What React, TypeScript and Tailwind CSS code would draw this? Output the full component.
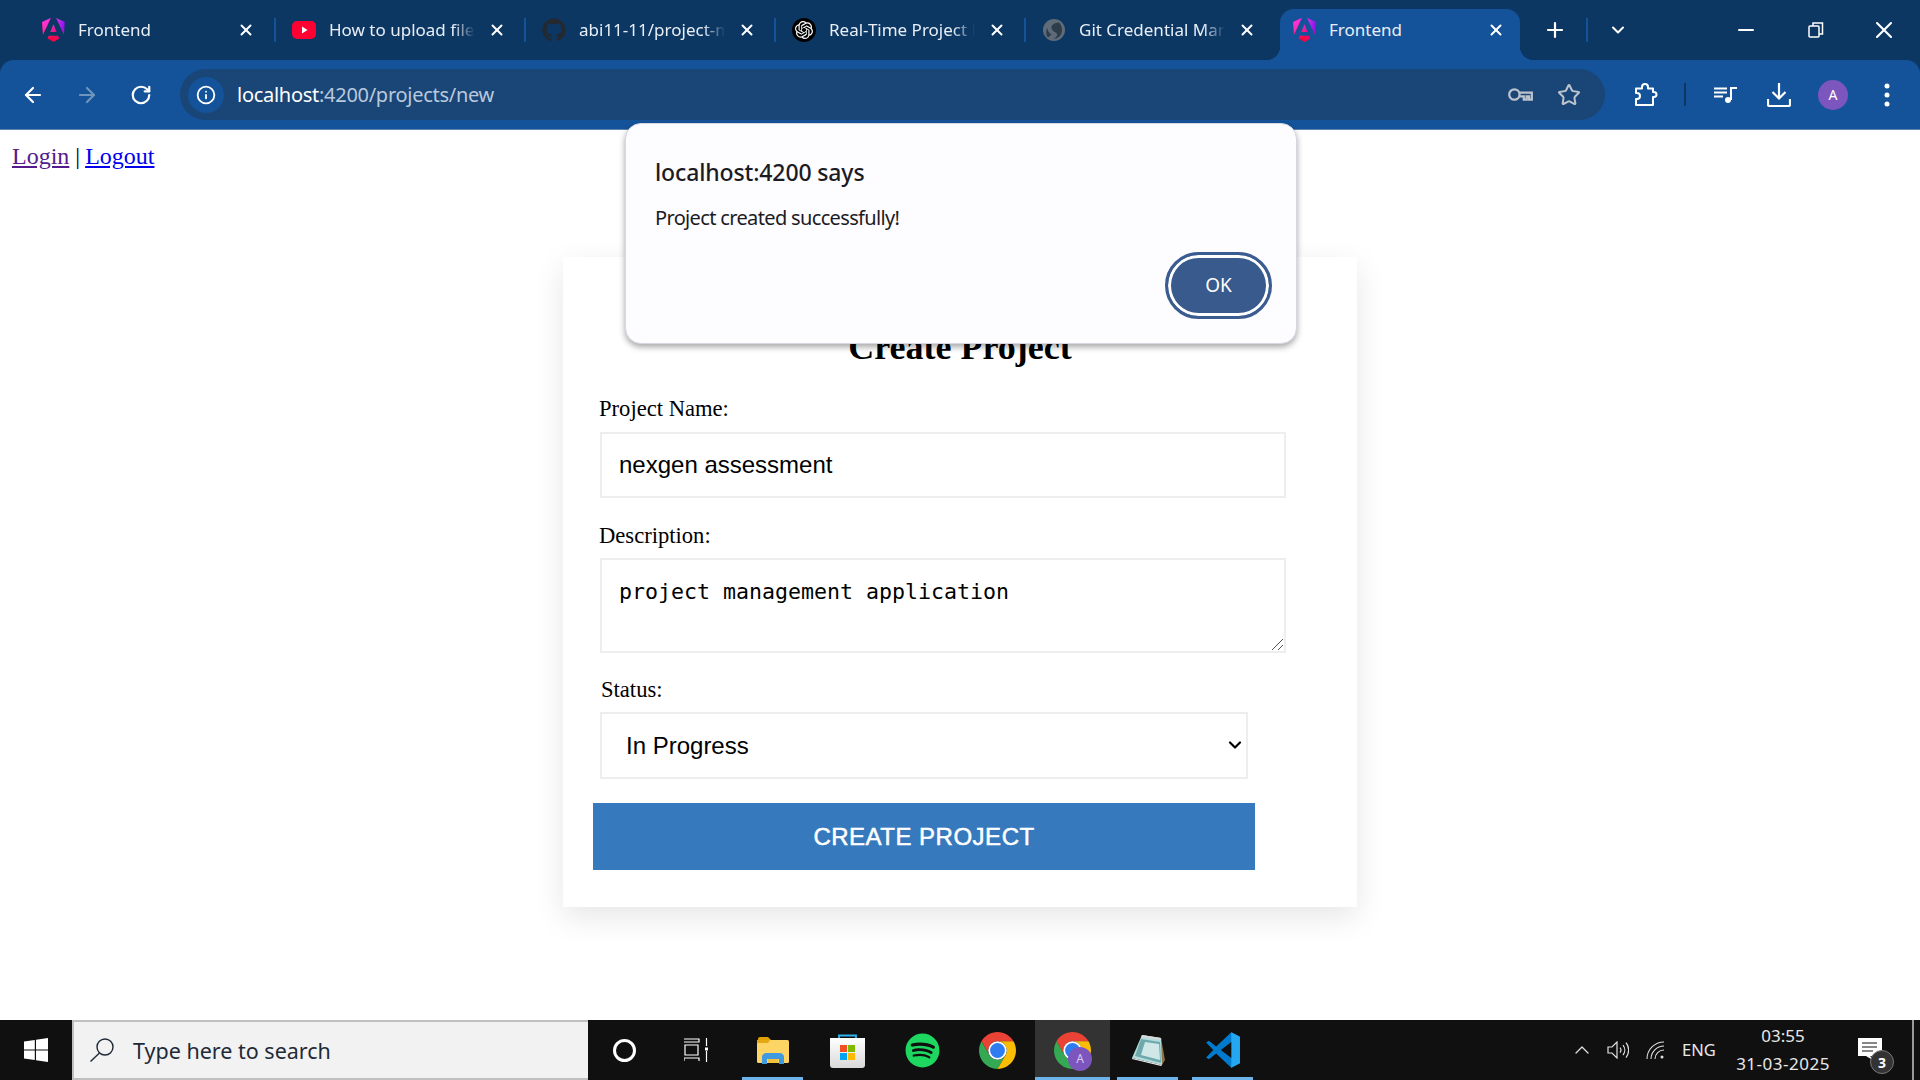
import React from 'react';
import {
  ArrowLeft,
  ArrowRight,
  ChevronDown,
  ChevronUp,
  Info,
  Minus,
  Plus,
  RotateCw,
  Star,
  X,
} from 'lucide-react';
import { FaGithub, FaSpotify } from 'react-icons/fa';
import { SiOpenai } from 'react-icons/si';

const AngularIcon = () => (
  <svg viewBox="0 0 223 236" className="w-[23px] h-[24px] shrink-0">
    <defs>
      <linearGradient id="ng" x1="49" y1="218" x2="225" y2="35" gradientUnits="userSpaceOnUse">
        <stop offset="0" stopColor="#e40035" />
        <stop offset="0.24" stopColor="#f60a48" />
        <stop offset="0.49" stopColor="#dc087d" />
        <stop offset="0.74" stopColor="#9717e7" />
        <stop offset="1" stopColor="#6c00f5" />
      </linearGradient>
      <linearGradient id="ng2" x1="41" y1="28" x2="148" y2="150" gradientUnits="userSpaceOnUse">
        <stop offset="0" stopColor="#ff31d9" />
        <stop offset="1" stopColor="#ff5be1" stopOpacity="0" />
      </linearGradient>
    </defs>
    <path
      fill="url(#ng)"
      d="m222.077 39.192-8.019 125.923L137.387 0l84.69 39.192Zm-53.105 162.825-57.933 33.056-57.934-33.056 11.783-28.556h92.301l11.783 28.556ZM111.039 62.675l30.357 73.803H80.681l30.358-73.803ZM7.937 165.115 0 39.192 84.69 0 7.937 165.115Z"
    />
    <path
      fill="url(#ng2)"
      d="m222.077 39.192-8.019 125.923L137.387 0l84.69 39.192Zm-53.105 162.825-57.933 33.056-57.934-33.056 11.783-28.556h92.301l11.783 28.556ZM111.039 62.675l30.357 73.803H80.681l30.358-73.803ZM7.937 165.115 0 39.192 84.69 0 7.937 165.115Z"
    />
  </svg>
);

const YoutubeIcon = () => (
  <svg viewBox="0 0 24 24" className="w-[24px] h-[24px] shrink-0">
    <rect x="0" y="3" width="24" height="18" rx="5" fill="#ff0033" />
    <path d="M10 8.500v7l5.500-3.500z" fill="#fff" />
  </svg>
);

const GitCredIcon = () => (
  <svg viewBox="0 0 24 24" className="w-[24px] h-[24px] shrink-0">
    <circle cx="12" cy="12" r="11" fill="#5f6b78" />
    <path d="M17 4.500C11 5 8 8 10 11.500s6 2.500 5 6c-.5 1.500-2 2.500-4 3 5 .5 9-3 9-8.500 0-3-1.200-5.600-3-7.500z" fill="#2f3c4a" />
    <path d="M6 19.500C4 17 3.500 13 5.500 9.500c-.5 3.500 2 5.500 4 7-1 1-2.200 2-3.500 3z" fill="#2f3c4a" />
  </svg>
);

const ChromeLogo = ({ className }: { className: string }) => (
  <svg viewBox="4 4 40 40" className={className}>
    <path fill="#ea4335" d="M24 4C16.600 4 10.100 8 6.700 14l8.640 15A10 10 0 0 1 24 14h17.300C37.900 8 31.400 4 24 4z" />
    <path fill="#34a853" d="M6.700 14A20 20 0 0 0 24 44l8.660-15a10 10 0 0 1-17.320 0L6.700 14z" />
    <path fill="#fbbc04" d="M41.300 14H24a10 10 0 0 1 8.660 15L24 44a20 20 0 0 0 17.300-30z" />
    <circle cx="24" cy="24" r="10" fill="#fff" />
    <circle cx="24" cy="24" r="8" fill="#2f7cf0" />
  </svg>
);

const ExplorerIcon = () => (
  <svg viewBox="0 0 32 27" className="w-[32px] h-[27px]">
    <path d="M1 2a2 2 0 0 1 2-2h8l3 3h-13z" fill="#e0a000" />
    <rect x="0" y="3" width="32" height="23" rx="1.500" fill="#fdd565" />
    <path d="M0 3h13l-2 3H0z" fill="#e5a812" />
    <path d="M5 27v-7a6 4 0 0 1 4-4h14a6 4 0 0 1 4 4v7h-5v-5H10v5z" fill="#3f9ae0" />
    <rect x="11" y="22" width="10" height="4" fill="#f3c23c" />
  </svg>
);

const StoreIcon = () => (
  <svg viewBox="0 0 35 35" className="w-[35px] h-[35px]">
    <defs>
      <linearGradient id="bag" x1="0" y1="0" x2="0" y2="1">
        <stop offset="0" stopColor="#ffffff" />
        <stop offset="1" stopColor="#d9d9d9" />
      </linearGradient>
    </defs>
    <path d="M9 7V2.500h17V7" fill="none" stroke="#2fb4f0" strokeWidth="1.800" />
    <path d="M0 5h35v27a3 3 0 0 1-3 3H3a3 3 0 0 1-3-3z" fill="url(#bag)" />
    <rect x="10" y="12" width="7" height="7" fill="#f25022" />
    <rect x="18" y="12" width="7" height="7" fill="#7fba00" />
    <rect x="10" y="20" width="7" height="7" fill="#00a4ef" />
    <rect x="18" y="20" width="7" height="7" fill="#ffb900" />
  </svg>
);

const NotepadIcon = () => (
  <svg viewBox="0 0 34 33" className="w-[34px] h-[33px]">
    <path d="M11 1l19 3 4 22-3 5-8-3z" fill="#8d7344" />
    <path d="M11 1l19 3 1 27L1 24z" fill="#b5dcdc" />
    <path d="M11 1l19 3 .2 2-20-3z" fill="#d8d8d8" />
    <path d="M10 5l19 3 1 21L4 22z" fill="#6ea9ad" />
    <path d="M14 8l14 2 1 16-19-5z" fill="#cfe7e6" />
    <path d="M1 24l30 7-1 1-29-7z" fill="#eeeeee" />
  </svg>
);

const VsCodeIcon = () => (
  <svg viewBox="0 0 100 100" className="w-[36px] h-[36px]">
    <path d="M73 1 31 40 11 24l-8 5 20 21-20 21 8 5 20-16 42 39 24-12V13z" fill="#007acc" />
    <path d="M73 1l24 12v74L73 99z" fill="#24a8f2" />
    <path d="M73 28v44L44 50z" fill="#101010" />
  </svg>
);

const tabs = [
  { title: 'Frontend', icon: <AngularIcon /> },
  { title: 'How to upload files to github', icon: <YoutubeIcon /> },
  { title: 'abi11-11/project-management', icon: <FaGithub className="w-[24px] h-[24px] shrink-0 text-[#24292f]" /> },
  {
    title: 'Real-Time Project Management',
    icon: (
      <span className="w-[24px] h-[24px] shrink-0 rounded-full bg-black flex items-center justify-center">
        <SiOpenai className="w-[18px] h-[18px] text-white" />
      </span>
    ),
  },
  { title: 'Git Credential Manager', icon: <GitCredIcon /> },
];

const TabItem = ({ title, icon, last }: { title: string; icon: React.ReactNode; last: boolean }) => (
  <div className="w-[250px] h-[36px] flex items-center pl-[16px] relative">
    {icon}
    <span className="ml-[13px] w-[146px] overflow-hidden whitespace-nowrap text-[17px] text-[#e8eef6] [mask-image:linear-gradient(to_right,#000_85%,transparent)]">
      {title}
    </span>
    <X className="w-[18px] h-[18px] ml-[13px] text-white" strokeWidth={2.6} />
    {!last && <span className="absolute right-0 top-[6px] h-[24px] w-[2px] bg-[#14539a]" />}
  </div>
);

const ToolbarIcon = ({ children, className }: { children: React.ReactNode; className: string }) => (
  <div className={`flex items-center justify-center shrink-0 ${className}`}>{children}</div>
);

const TaskItem = ({ children, underline, active }: { children: React.ReactNode; underline?: boolean; active?: boolean }) => (
  <div className={`w-[75px] h-full flex items-center justify-center relative ${active ? 'bg-[#333333]' : ''}`}>
    {children}
    {underline && (
      <span className={`absolute bottom-0 h-[3px] bg-[#6db3ec] ${active ? 'left-0 right-0' : 'left-[7px] right-[7px]'}`} />
    )}
  </div>
);

export default function App() {
  return (
    <div className="h-screen w-full flex flex-col overflow-hidden relative bg-white font-['Noto_Sans',sans-serif]">
      {/* tab strip */}
      <div className="h-[60px] shrink-0 bg-[#0d3763] flex pl-[26px] pt-[12px] text-white">
        {tabs.map((t, i) => (
          <TabItem key={t.title} title={t.title} icon={t.icon} last={i === tabs.length - 1} />
        ))}
        <div className="w-[240px] h-[51px] -mt-[3px] ml-[4px] rounded-t-[14px] bg-[#14539a] flex items-center pl-[13px] pb-[9px] relative">
          <AngularIcon />
          <span className="ml-[13px] w-[158px] text-[17px] text-[#e8eef6]">Frontend</span>
          <X className="w-[18px] h-[18px] text-white" strokeWidth={2.6} />
          <span className="absolute bottom-0 -left-[14px] w-[14px] h-[14px] bg-[radial-gradient(circle_at_0_0,transparent_14px,#14539a_14.500px)]" />
          <span className="absolute bottom-0 -right-[14px] w-[14px] h-[14px] bg-[radial-gradient(circle_at_100%_0,transparent_14px,#14539a_14.500px)]" />
        </div>
        <div className="flex items-center h-[36px] ml-[23px]">
          <Plus className="w-[24px] h-[24px]" strokeWidth={2.2} />
          <span className="w-[2px] h-[24px] bg-[#14539a] ml-[19px]" />
          <ChevronDown className="w-[20px] h-[20px] ml-[20px]" strokeWidth={2.4} />
          <Minus className="w-[24px] h-[24px] ml-[106px]" strokeWidth={2} />
          <svg viewBox="0 0 16 16" className="w-[16px] h-[16px] ml-[50px]" fill="none" stroke="#fff" strokeWidth="1.500">
            <rect x="1" y="4" width="10" height="11" rx="1" />
            <path d="M5 4V1h9.500v11H11" />
          </svg>
          <X className="w-[28px] h-[28px] ml-[46px]" strokeWidth={1.800} />
        </div>
      </div>

      {/* toolbar */}
      <div className="h-[70px] shrink-0 bg-[#0d3763]">
        <div className="h-full rounded-t-[14px] bg-[#14539a] border-b border-[#5f83ad] flex items-center text-white">
          <ToolbarIcon className="w-[66px]">
            <ArrowLeft className="w-[24px] h-[24px]" strokeWidth={2.2} />
          </ToolbarIcon>
          <ToolbarIcon className="w-[42px]">
            <ArrowRight className="w-[24px] h-[24px] text-[#6f94be]" strokeWidth={2.2} />
          </ToolbarIcon>
          <ToolbarIcon className="w-[66px]">
            <RotateCw className="w-[22px] h-[22px]" strokeWidth={2.4} />
          </ToolbarIcon>
          <div className="ml-[6px] w-[1425px] h-[51px] rounded-full bg-[#1a4577] flex items-center pl-[8px]">
            <div className="w-[36px] h-[36px] rounded-full bg-[#14539a] flex items-center justify-center">
              <Info className="w-[20px] h-[20px]" strokeWidth={2.2} />
            </div>
            <span className="ml-[13px] text-[20px] tracking-[-0.28px]">
              localhost<span className="text-[#b9c9dd]">:4200/projects/new</span>
            </span>
            <div className="ml-auto flex items-center text-[#bcc4ce] pr-[24px]">
              <svg viewBox="0 0 28 17" className="w-[27px] h-[16px]" fill="none" stroke="currentColor" strokeWidth="2.400">
                <circle cx="7.500" cy="8" r="5.500" />
                <path d="M13 6h13v7.500h-3V10h-2.500v3.500h-3V10H13" />
              </svg>
              <Star className="w-[24px] h-[24px] ml-[23px]" strokeWidth={2} />
            </div>
          </div>
          {/* extensions */}
          <svg viewBox="0 0 24 23" className="w-[24px] h-[23px] ml-[29px]" fill="none" stroke="#fff" strokeWidth="2" strokeLinejoin="round">
            <path d="M2 5.500h6V4a3 3 0 0 1 6 0v1.500h5V9h1a2.500 2.500 0 0 1 0 5h-1v8H2v-6h1a3 3 0 0 0 0-6H2z" />
          </svg>
          <span className="w-[2px] h-[23px] bg-[#0d3763] ml-[26px]" />
          {/* media controls */}
          <svg viewBox="0 0 23 16" className="w-[23px] h-[16px] ml-[28px]" fill="none" stroke="#fff" strokeWidth="1.800">
            <path d="M0 1.500h13M0 5.500h13M0 9.500h9" />
            <path d="M17 13V1h6" strokeWidth="2" />
            <circle cx="14" cy="13" r="3" fill="#fff" stroke="none" />
          </svg>
          {/* downloads */}
          <svg viewBox="0 0 24 24" className="w-[24px] h-[24px] ml-[30px]" fill="none" stroke="#fff" strokeWidth="2.200">
            <path d="M12 0v15M5.500 9l6.500 6.500L18.500 9" />
            <path d="M1 16v5.500a1.500 1.500 0 0 0 1.500 1.500h19a1.500 1.500 0 0 0 1.500-1.500V16" />
          </svg>
          <div className="w-[30px] h-[30px] rounded-full bg-[#7c55bd] ml-[27px] flex items-center justify-center text-[14px]">A</div>
          <svg viewBox="0 0 6 24" className="w-[6px] h-[24px] ml-[36px]" fill="#fff">
            <circle cx="3" cy="3" r="2.500" />
            <circle cx="3" cy="12" r="2.500" />
            <circle cx="3" cy="21" r="2.500" />
          </svg>
        </div>
      </div>

      {/* page */}
      <div className="flex-1 min-h-0 font-['Liberation_Serif',serif] text-black">
        <div className="pl-[12px] pt-[13px] text-[24px] leading-[27px]">
          <a className="text-[#551a8b] underline" href="#login">Login</a>
          {' | '}
          <a className="-ml-[1px] text-[#0000ee] underline" href="#logout">Logout</a>
        </div>
        <div className="w-[794px] h-[650px] mx-auto mt-[87px] bg-white shadow-[0_10px_30px_rgba(0,0,0,0.1)] flex flex-col items-start pl-[37px] pt-[72px]">
          <h2 className="w-[720px] text-center text-[36px] leading-[37px] font-bold">Create Project</h2>
          <label className="block mt-[31px] text-[22.600px] leading-[23px] -ml-[1px]">Project Name:</label>
          <input
            readOnly
            value="nexgen assessment"
            className="mt-[12px] w-[686px] h-[66px] border-2 border-[#eeeeee] pl-[17px] text-[24px] font-['Liberation_Sans',sans-serif] outline-none"
          />
          <label className="block mt-[26px] text-[22.600px] leading-[23px] -ml-[1px]">Description:</label>
          <div className="relative mt-[11px] w-[686px] h-[95px]">
            <textarea
              readOnly
              value="project management application"
              className="block w-full h-full border-2 border-[#eeeeee] pl-[17px] pt-[19px] text-[21.600px] leading-[26px] font-['DejaVu_Sans_Mono',monospace] outline-none resize-none"
            />
            <svg viewBox="0 0 11 11" className="absolute right-[3px] bottom-[3px] w-[11px] h-[11px] pointer-events-none" fill="none" stroke="#555555" strokeWidth="1">
              <path d="M0 11 11 0M6 11l5-5" />
            </svg>
          </div>
          <label className="block mt-[25px] text-[22.600px] leading-[23px] ml-[1px]">Status:</label>
          <div className="relative mt-[11px] w-[648px] h-[67px]">
            <select
              defaultValue="In Progress"
              className="w-full h-full appearance-none border-2 border-[#eeeeee] pl-[24px] text-[24px] font-['Liberation_Sans',sans-serif] outline-none bg-white"
            >
              <option>In Progress</option>
            </select>
            <ChevronDown className="absolute right-[3px] top-[23px] w-[20px] h-[20px] pointer-events-none" strokeWidth={2.6} />
          </div>
          <button className="mt-[24px] -ml-[7px] w-[662px] h-[67px] bg-[#3679bd] text-white text-[24px] tracking-[0.5px] font-['Liberation_Sans',sans-serif] [-webkit-text-stroke:0.5px_white]">
            CREATE PROJECT
          </button>
        </div>
      </div>

      {/* alert dialog */}
      <div className="absolute left-[625px] top-[123px] w-[672px] h-[221px] rounded-[16px] bg-[#fdfcff] border border-[#d5d8e4] shadow-[0_3px_6px_rgba(0,0,0,0.35)] flex flex-col pl-[29px] pr-[24px] pt-[32px]">
        <div className="text-[23px] leading-[32px] font-medium text-[#1c1b1f] tracking-[-0.13px]">localhost:4200 says</div>
        <div className="mt-[17px] text-[20px] leading-[26px] text-[#1c1b1f] tracking-[-0.65px]">Project created successfully!</div>
        <button className="self-end mt-[21px] w-[107px] h-[67px] rounded-full bg-[#385a8c] border-[3px] border-[#3b5c91] shadow-[inset_0_0_0_3px_#fff] text-white text-[19px]">
          OK
        </button>
      </div>

      {/* taskbar */}
      <div className="h-[60px] shrink-0 bg-[#101010] flex items-center text-white">
        <div className="w-[72px] h-full flex items-center justify-center">
          <svg viewBox="0 0 24 24" className="w-[24px] h-[24px]" fill="#fff">
            <path d="M0 3.400 10.800 1.900v9.500H0zM12 1.700 24 0v11.400H12zM0 12.600h10.800v9.500L0 20.600zM12 12.600h12V24l-12-1.700z" />
          </svg>
        </div>
        <div className="w-[516px] h-full bg-[#f2f2f2] border-2 border-r-0 border-[#c0c0c0] flex items-center pl-[16px] text-[#1f2a37]">
          <svg viewBox="0 0 24 24" className="w-[24px] h-[24px]" fill="none" stroke="#1f2a37" strokeWidth="1.400">
            <circle cx="15" cy="9" r="8" />
            <path d="M9.500 15 .5 23.500" />
          </svg>
          <span className="ml-[19px] text-[21.500px] mt-[2px]">Type here to search</span>
        </div>
        <div className="w-[72px] h-full flex items-center justify-center">
          <span className="w-[23px] h-[23px] rounded-full border-[3.500px] border-white" />
        </div>
        <div className="w-[72px] h-full flex items-center justify-center">
          <svg viewBox="0 0 24 24" className="w-[24px] h-[24px]" fill="none" stroke="#fff" strokeWidth="1.200">
            <path d="M0 1h15v3H0M0 23v-3h15v3M1 7h13v10H1zM22.500 0v8M22.500 13v11" />
            <rect x="21" y="9.500" width="3" height="3" fill="#fff" stroke="none" />
          </svg>
        </div>
        <div className="ml-[3px] h-full flex">
          <TaskItem underline><ExplorerIcon /></TaskItem>
          <TaskItem><StoreIcon /></TaskItem>
          <TaskItem><FaSpotify className="w-[35px] h-[35px] text-[#1ed760]" /></TaskItem>
          <TaskItem><ChromeLogo className="w-[37px] h-[37px]" /></TaskItem>
          <TaskItem underline active>
            <ChromeLogo className="w-[37px] h-[37px]" />
            <span className="absolute left-[33px] top-[27px] w-[24px] h-[24px] rounded-full bg-[#7c55bd] flex items-center justify-center text-[12px] text-[#d9c8f2]">A</span>
          </TaskItem>
          <TaskItem underline><NotepadIcon /></TaskItem>
          <TaskItem underline><VsCodeIcon /></TaskItem>
        </div>
        <div className="ml-auto h-full flex items-center">
          <ChevronUp className="w-[24px] h-[24px] text-[#e0e0e0] mr-[1px]" strokeWidth={1.300} />
          <svg viewBox="0 0 22 18" className="w-[22px] h-[18px] ml-[12px]" fill="none" stroke="#e0e0e0" strokeWidth="1.200">
            <path d="M1 6h4l5-5v16l-5-5H1z" />
            <path d="M13 6.500a4 4 0 0 1 0 5M16 4a8 8 0 0 1 0 10M19 1.500a12 12 0 0 1 0 15" />
          </svg>
          <svg viewBox="0 0 19 18" className="w-[19px] h-[18px] ml-[17px]" fill="none" stroke="#e0e0e0" strokeWidth="1.100">
            <path d="M1 18A17 17 0 0 1 18 1M5 18A13 13 0 0 1 18 5M9 18a9 9 0 0 1 9-9" />
            <circle cx="16" cy="16" r="1.500" fill="#e0e0e0" stroke="none" />
          </svg>
          <span className="ml-[17px] w-[34px] text-[16.500px] text-[#e8e8e8] whitespace-nowrap">ENG</span>
          <div className="ml-[17px] w-[100px] flex flex-col items-center text-[17px] leading-[28px] text-[#e8e8e8] whitespace-nowrap">
            <span>03:55</span>
            <span className="tracking-[0.5px]">31-03-2025</span>
          </div>
          <div className="ml-[25px] w-[34px] h-full relative">
            <svg viewBox="0 0 24 24" className="absolute left-0 top-[18px] w-[24px] h-[24px]" fill="#fff">
              <path d="M0 0h24v18H12l6 6-10-6H0z" />
              <path d="M4 5h15M4 9h15M4 13h11" stroke="#101010" strokeWidth="1.100" />
            </svg>
            <span className="absolute left-[12px] top-[30px] w-[24px] h-[24px] rounded-full bg-[#333333] border border-[#777777] flex items-center justify-center text-[14px] font-bold">3</span>
          </div>
          <span className="ml-[20px] w-[2px] h-full bg-[#999999]" />
          <span className="w-[6px]" />
        </div>
      </div>
    </div>
  );
}
